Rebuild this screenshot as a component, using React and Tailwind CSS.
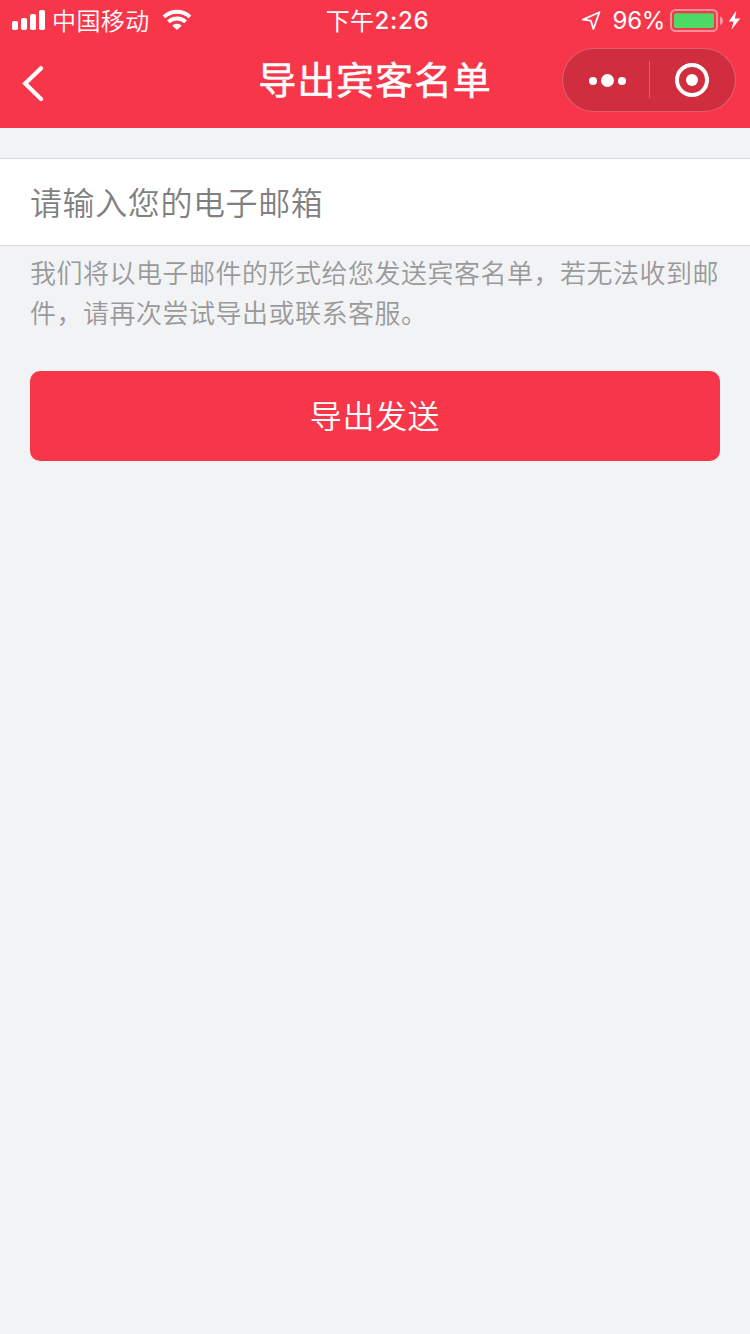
import { useState } from "react";

const StatusBar = () => {
  return (
    <div className="flex h-10 items-center pl-3 pr-[9px]">
      <div className="flex flex-1 items-center">
        <svg width="33" height="20" viewBox="0 0 33 20" fill="white">
          <rect x="0" y="11" width="6" height="9" rx="1.8" />
          <rect x="9" y="8" width="6" height="12" rx="1.8" />
          <rect x="18" y="4" width="6" height="16" rx="1.8" />
          <rect x="27" y="0" width="6" height="20" rx="1.8" />
        </svg>
        <span className="ml-[7px] text-[24px] leading-10 tracking-[0.4px] font-[350]">中国移动</span>
        <svg className="ml-[12px]" width="30" height="22" viewBox="0 0 30 22" fill="none" stroke="white">
          <path d="M2 7.9C9.2 1.1 20.8 1.1 28 7.9" strokeWidth="4" />
          <path d="M6.4 12.8C11.3 8.3 18.7 8.3 23.6 12.8" strokeWidth="4" />
          <path d="M15 21L10.4 16.8C13 14.2 17 14.2 19.6 16.8Z" fill="white" stroke="none" />
        </svg>
      </div>

      <div className="flex items-center pl-[2px] text-[24px] leading-10 tracking-[0.4px]">
        <span>下午</span>
        <span className="pt-[2px] font-[Inter] font-medium tracking-[0.7px]">2:26</span>
      </div>

      <div className="flex flex-1 items-center justify-end">
        <svg width="20" height="20" viewBox="0 0 20 20" fill="none" stroke="white" strokeWidth="1.8" strokeLinejoin="round">
          <path d="M18.4 2.2L1.8 9.6L9.8 10.6L12.4 19Z" />
        </svg>
        <span className="ml-[12px] pt-[2px] font-[Inter] text-[24px] leading-10 tracking-[-0.3px]">96%</span>
        <svg className="ml-[5px]" width="54" height="24" viewBox="0 0 54 24" fill="none">
          <rect x="1" y="2" width="46" height="21" rx="4.5" stroke="white" strokeOpacity="0.45" strokeWidth="2" />
          <rect x="4" y="5.2" width="40" height="14.8" rx="1.8" fill="#4cd964" />
          <path d="M50 8.6V17C52 16.2 53 14.6 53 12.8C53 11 52 9.4 50 8.6Z" fill="white" fillOpacity="0.5" />
        </svg>
        <svg className="ml-[4px]" width="13" height="20" viewBox="0 0 13 20" fill="white">
          <path d="M8.4 0.4L0.8 11.6H5.6L3.4 19.8L12.2 8.4H6.9Z" />
        </svg>
      </div>
    </div>
  );
};

const NavBar = () => {
  return (
    <div className="grid h-22 grid-cols-3 items-center">
      <button className="ml-[22px] w-6" aria-label="返回">
        <svg width="24" height="36" viewBox="0 0 24 36" fill="none" stroke="white" strokeWidth="4.2" strokeLinecap="round">
          <path d="M19 2.2L3.2 17.6L19 33" />
        </svg>
      </button>
      <h1 className="mb-[12px] text-center text-[38px] leading-[72px] tracking-[0.9px] whitespace-nowrap [-webkit-text-stroke:0.5px_white]">
        导出宾客名单
      </h1>
      {/* mini program capsule */}
      <div className="mr-[14px] mb-2 flex h-16 w-[174px] items-center justify-self-end rounded-full border border-white/25 bg-[#d02e3e]">
        <button className="flex w-[86px] items-center justify-center gap-1 pt-px pl-[3px]" aria-label="更多">
          <span className="size-2 rounded-full bg-white" />
          <span className="size-[13px] rounded-full bg-white" />
          <span className="size-2 rounded-full bg-white" />
        </button>
        <span className="mb-px h-[37px] w-px bg-white/25" />
        <button className="flex flex-1 justify-center pr-px" aria-label="关闭">
          <span className="flex size-[34px] items-center justify-center rounded-full border-4 border-white">
            <span className="size-3 rounded-full bg-white" />
          </span>
        </button>
      </div>
    </div>
  );
};

export default function App() {
  const [email, setEmail] = useState("");

  return (
    <div className="min-h-screen bg-[#f1f3f5] font-['Noto_Sans_CJK_SC',sans-serif]">
      <header className="h-32 bg-[#f7364a] text-white">
        <StatusBar />
        <NavBar />
      </header>

      <main className="pt-[30px]">
        <div className="h-[88px] border-y border-[#d9d9d9] bg-white px-[30px]">
          <input
            type="email"
            value={email}
            onChange={(e) => setEmail(e.target.value)}
            placeholder="请输入您的电子邮箱"
            className="h-full w-full pb-[2px] text-[32px] font-[350] tracking-[0.6px] outline-none placeholder:text-[#808080]"
          />
        </div>
        <p className="px-[30px] pt-[6px] text-[26px] leading-10 font-[350] tracking-[0.5px] text-[#999]">
          我们将以电子邮件的形式给您发送宾客名单，若无法收到邮件，请再次尝试导出或联系客服。
        </p>
        <div className="px-[30px] pt-[39px]">
          <button className="h-[90px] w-full rounded-[10px] bg-[#f7364a] pb-[4px] text-[32px] font-[350] tracking-[0.6px] text-white">
            导出发送
          </button>
        </div>
      </main>
    </div>
  );
}
